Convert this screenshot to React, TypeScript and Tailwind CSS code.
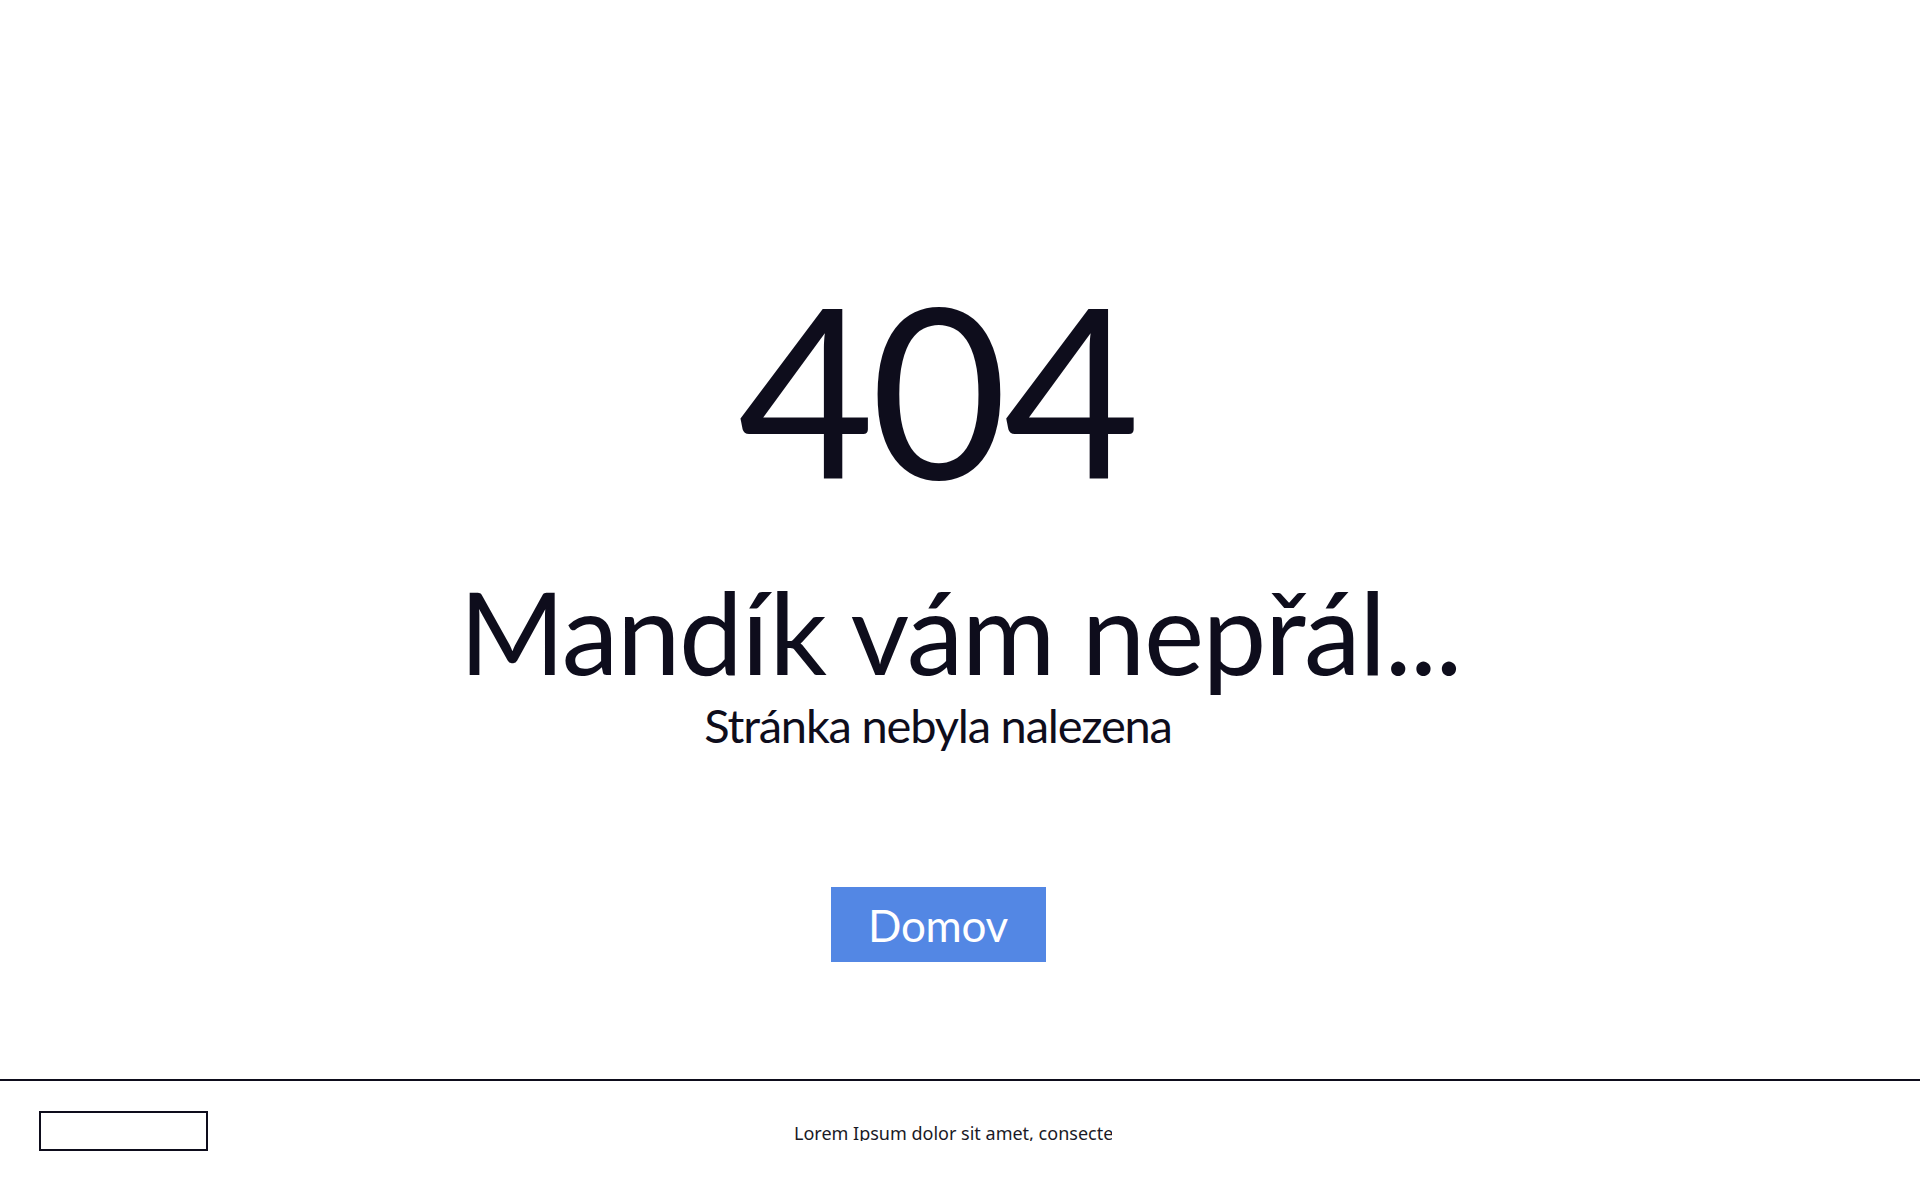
import React from "react";

export default function App() {
  return (
    <div className="w-[1920px] h-[1180px] bg-white overflow-hidden text-[#0e0d1c]" style={{ fontFamily: "Lato, 'Noto Sans', sans-serif" }}>
      <main className="h-[1079px] flex flex-col items-center pt-[270px]">
        <h1 className="mr-[46px] text-[236px] leading-none font-normal tracking-[-4px]">404</h1>
        <h2 className="mt-[68px] text-[114px] leading-none font-normal tracking-[-1.5px]">Mandík vám nepřál...</h2>
        <p className="mr-[44px] mt-[14px] text-[47px] leading-none tracking-[-1.2px]">Stránka nebyla nalezena</p>
        <a href="#" className="mr-[44px] mt-[138px] w-[215px] h-[75px] bg-[#5387e4] text-white text-[44px] leading-none flex items-center justify-center tracking-[-0.3px]">
          Domov
        </a>
      </main>
      <footer className="border-t-2 border-[#0e0d1c] h-[101px] relative">
        <div className="absolute left-[39px] top-[30px] w-[169px] h-[40px] border-2 border-[#0e0d1c]"></div>
        <div className="flex justify-center pt-[41px]">
          <div className="mr-[14px] w-[318px] h-[19px] overflow-hidden whitespace-nowrap text-[18px] leading-[22px] text-[#1a1a26]" style={{ fontFamily: "'Noto Sans', sans-serif" }}>
            Lorem Ipsum dolor sit amet, consectetur adipiscing elit
          </div>
        </div>
      </footer>
    </div>
  );
}
